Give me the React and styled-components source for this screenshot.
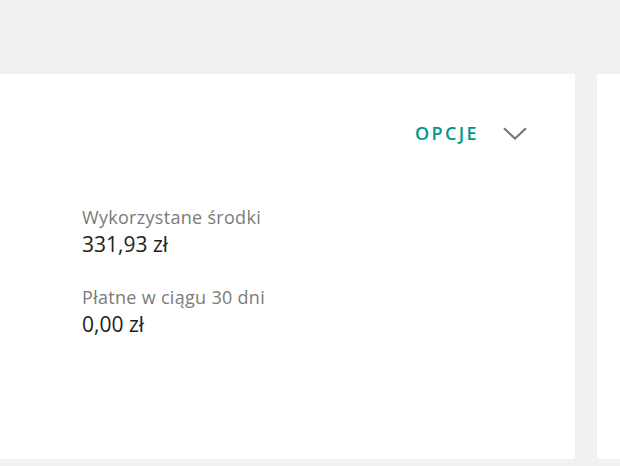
import React from "react";
import styled, { createGlobalStyle } from "styled-components";

const GlobalStyle = createGlobalStyle`
  html, body {
    margin: 0;
    padding: 0;
    background: #f0f1f3;
    font-family: "Open Sans", "Noto Sans", sans-serif;
  }
`;

const Page = styled.div`
  display: flex;
  gap: 22px;
  padding-top: 74px;
  height: 466px;
  box-sizing: border-box;
  overflow: hidden;
`;

const Card = styled.section`
  flex: 0 0 ${(p) => p.width}px;
  height: 385px;
  background: #ffffff;
  box-sizing: border-box;
  padding: 47px 48px 0 82px;
`;

const Toolbar = styled.div`
  display: flex;
  justify-content: flex-end;
  align-items: center;
  gap: 24px;
  height: 25px;
`;

const Options = styled.button`
  border: 0;
  background: none;
  padding: 0;
  font-family: inherit;
  font-size: 18px;
  line-height: 25px;
  font-weight: 600;
  letter-spacing: 2.4px;
  color: #00968a;
  cursor: pointer;
`;

const Stats = styled.dl`
  margin: 59px 0 0;
  display: flex;
  flex-direction: column;
  gap: 28px;
`;

const Stat = styled.div`
  display: flex;
  flex-direction: column;
  gap: 2px;
`;

const Label = styled.dt`
  font-size: 18px;
  letter-spacing: 0.3px;
  color: #7b7b7b;
  line-height: 24px;
`;

const Value = styled.dd`
  margin: 0;
  font-size: 21px;
  font-weight: 500;
  color: #222;
  line-height: 26px;
`;

const stats = [
  { label: "Wykorzystane środki", value: "331,93 zł" },
  { label: "Płatne w ciągu 30 dni", value: "0,00 zł" },
];

function App() {
  return (
    <>
      <GlobalStyle />
      <Page>
        <Card width={575}>
          <Toolbar>
            <Options>OPCJE</Options>
            <svg width="24" height="13" viewBox="0 0 24 13" fill="none">
              <path d="M1 1.2L12 11.5L23 1.2" stroke="#777" strokeWidth="2.2" />
            </svg>
          </Toolbar>
          <Stats>
            {stats.map((s) => (
              <Stat key={s.label}>
                <Label>{s.label}</Label>
                <Value>{s.value}</Value>
              </Stat>
            ))}
          </Stats>
        </Card>
        <Card width={300} />
      </Page>
    </>
  );
}

export default App;
